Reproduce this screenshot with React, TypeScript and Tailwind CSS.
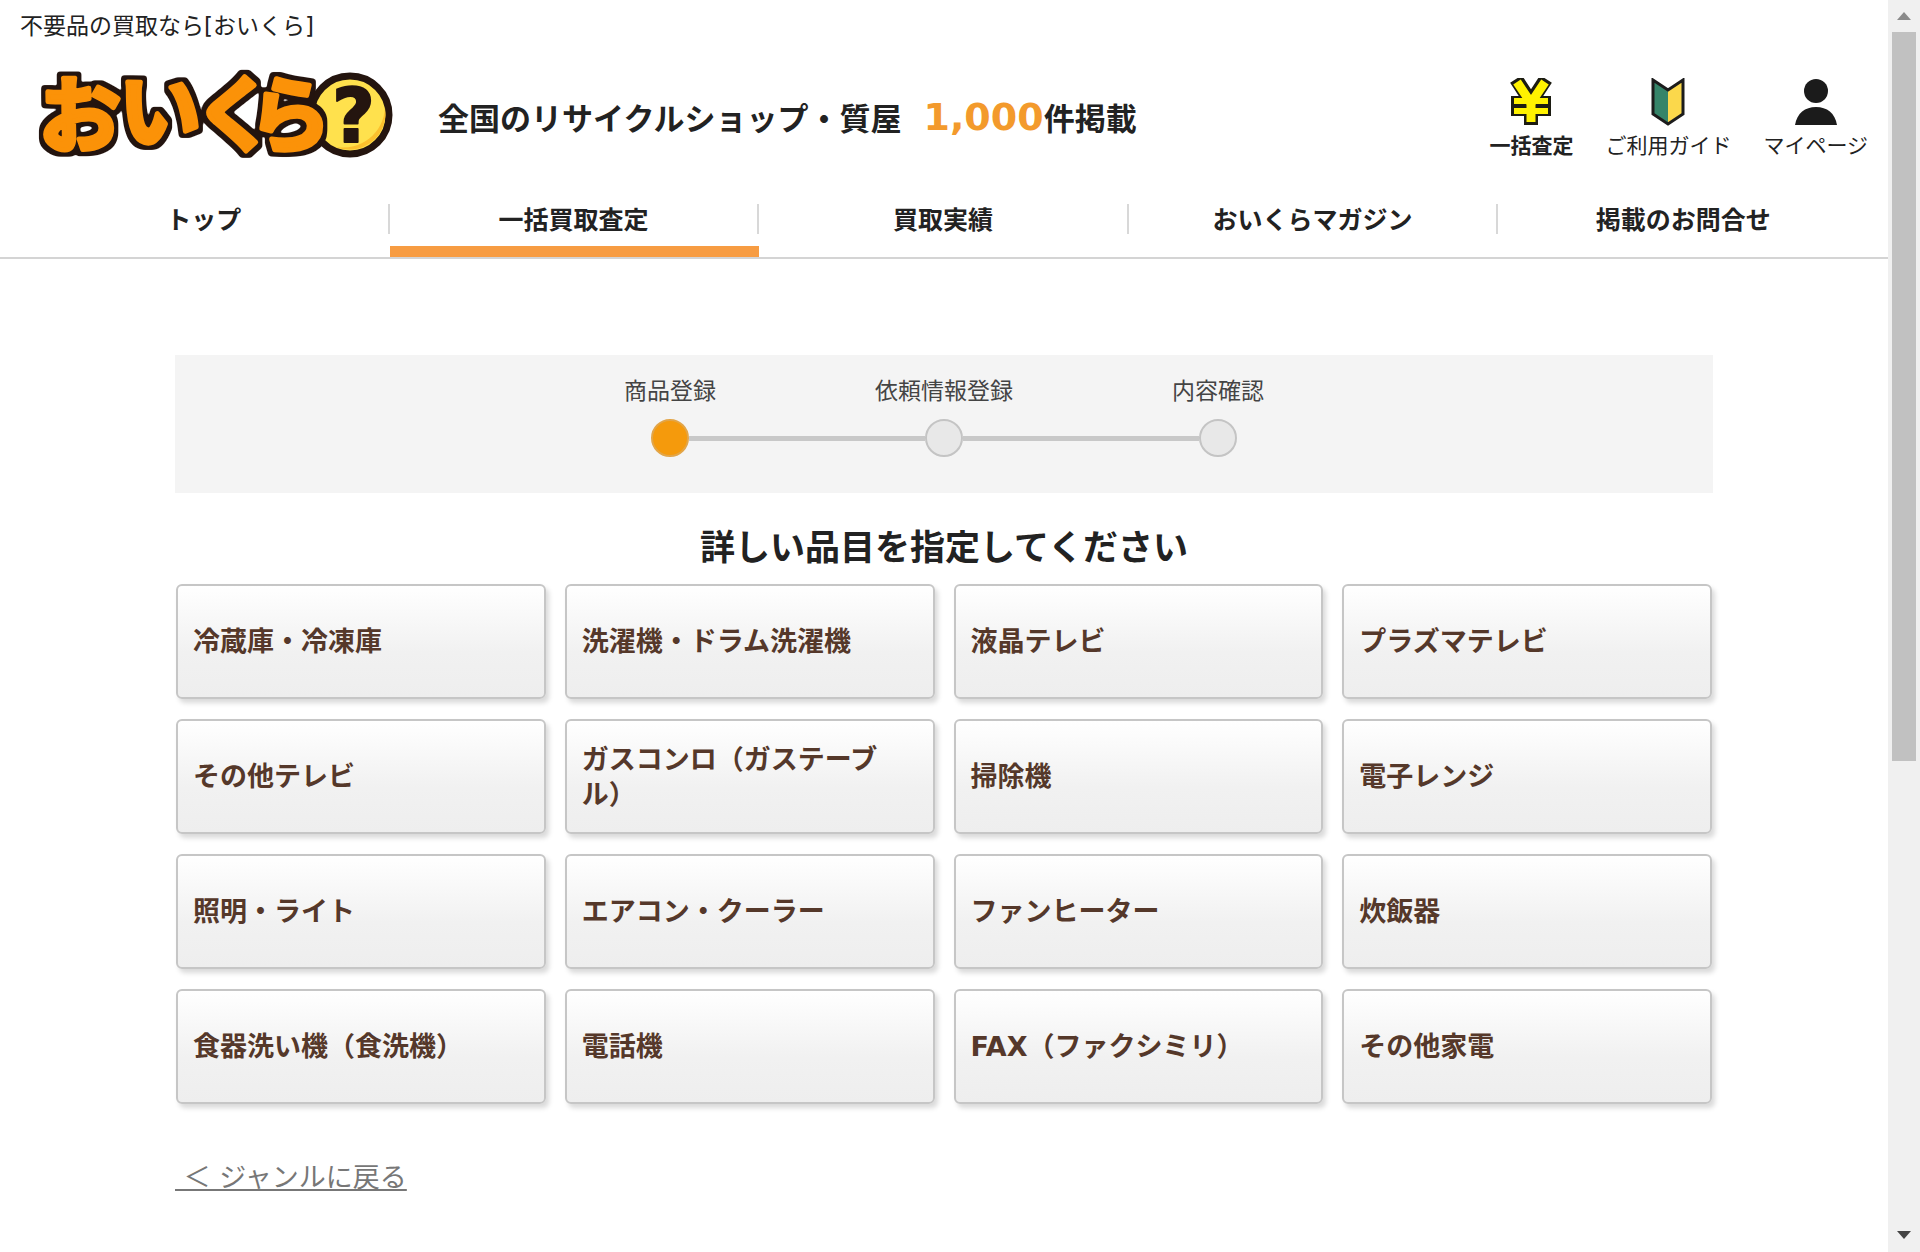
import React from 'react';

const navItems = ['トップ', '一括買取査定', '買取実績', 'おいくらマガジン', '掲載のお問合せ'];

const steps = ['商品登録', '依頼情報登録', '内容確認'];

const categories = [
  '冷蔵庫・冷凍庫',
  '洗濯機・ドラム洗濯機',
  '液晶テレビ',
  'プラズマテレビ',
  'その他テレビ',
  'ガスコンロ（ガステーブル）',
  '掃除機',
  '電子レンジ',
  '照明・ライト',
  'エアコン・クーラー',
  'ファンヒーター',
  '炊飯器',
  '食器洗い機（食洗機）',
  '電話機',
  'FAX（ファクシミリ）',
  'その他家電',
];

const Logo: React.FC = () => (
  <svg width="360" height="92" viewBox="0 0 360 92" className="overflow-visible" role="img" aria-label="おいくら">
    <defs>
      <filter id="logo-outline" x="-10%" y="-10%" width="120%" height="120%" colorInterpolationFilters="sRGB">
        <feMorphology in="SourceAlpha" operator="dilate" radius="4" result="thick" />
        <feGaussianBlur in="thick" stdDeviation="1" result="soft" />
        <feComponentTransfer in="soft" result="edge">
          <feFuncR type="linear" slope="0" intercept="0.140" />
          <feFuncG type="linear" slope="0" intercept="0.080" />
          <feFuncB type="linear" slope="0" intercept="0.060" />
          <feFuncA type="linear" slope="3" intercept="-0.800" />
        </feComponentTransfer>
        <feMerge>
          <feMergeNode in="edge" />
          <feMergeNode in="SourceGraphic" />
        </feMerge>
      </filter>
    </defs>
    <circle cx="314" cy="47" r="39" fill="#ffe14d" stroke="#24150f" strokeWidth="7" />
    <path d="M300 79 A36 36 0 0 0 349 40 A42 42 0 0 1 300 79Z" fill="#fbc02d" />
    <text
      x="3 83 158 213"
      y="77 73 76 77"
      fontSize="82"
      fontWeight="700"
      fill="#fb9208"
      stroke="#fb9208"
      strokeWidth="5"
      strokeLinejoin="round"
      filter="url(#logo-outline)"
    >
      おいくら
    </text>
    <text
      x="296"
      y="74"
      fontSize="74"
      fontWeight="700"
      fill="#24150f"
      stroke="#24150f"
      strokeWidth="2"
      strokeLinejoin="round"
    >
      ?
    </text>
  </svg>
);

const YenIcon: React.FC = () => (
  <svg width="44" height="48" viewBox="0 0 44 48" fill="none" aria-hidden="true">
    <g stroke="#1c1c12">
      <path d="M7 1 L22 24 L37 1" strokeWidth="14" />
      <path d="M22 20 V47" strokeWidth="14" />
      <path d="M2 23 H42 M2 33 H42" strokeWidth="10" />
    </g>
    <g stroke="#fff200">
      <path d="M8 4 L22 25 L36 4" strokeWidth="9" />
      <path d="M22 20 V44" strokeWidth="9" />
      <path d="M5 23 H39 M5 33 H39" strokeWidth="6" />
    </g>
  </svg>
);

const BeginnerIcon: React.FC = () => (
  <svg width="34" height="48" viewBox="0 0 34 48" aria-hidden="true">
    <path d="M2 2 L17 12 V45 L2 35Z" fill="#358469" />
    <path d="M32 2 L17 12 V45 L32 35Z" fill="#fbd84b" />
    <path d="M2 2 L17 12 L32 2 V36 L17 46 L2 36Z" fill="none" stroke="#1c1c1c" strokeWidth="3" />
  </svg>
);

const PersonIcon: React.FC = () => (
  <svg width="44" height="48" viewBox="0 0 44 48" fill="#1b1b1b" aria-hidden="true">
    <circle cx="22" cy="13" r="12" />
    <path d="M1 47 C3 35 11 29 22 29 S41 35 43 47Z" />
  </svg>
);

const headerLinks = [
  { label: '一括査定', icon: <YenIcon />, bold: true },
  { label: 'ご利用ガイド', icon: <BeginnerIcon />, bold: false },
  { label: 'マイページ', icon: <PersonIcon />, bold: false },
];

const Header: React.FC = () => (
  <header className="border-b-2 border-[#d4d4d4]">
    <p className="px-5 pt-3 text-[23px] leading-7">不要品の買取なら[おいくら]</p>
    <div className="flex items-center pt-7 pr-5 pl-9">
      <a href="#">
        <Logo />
      </a>
      <p className="ml-[42px] flex items-baseline pt-2 text-[31px] leading-10 font-bold">
        全国のリサイクルショップ・質屋
        <span className="ml-[22px] text-[38px] text-[#f39a2c]">1,000</span>
        件掲載
      </p>
      <ul className="ml-auto flex gap-8">
        {headerLinks.map((link) => (
          <li key={link.label}>
            <a href="#" className="flex flex-col items-center gap-1.5 pt-2.5 text-[21px] leading-7">
              {link.icon}
              <span className={link.bold ? 'font-bold' : ''}>{link.label}</span>
            </a>
          </li>
        ))}
      </ul>
    </div>
    <nav className="px-5 pt-11">
      <ul className="grid grid-cols-5 text-center text-[25px] leading-[34px] font-bold">
        {navItems.map((item, index) => (
          <li key={item}>
            <a href="#" className="block">
              <span className={`block h-[30px] ${index < navItems.length - 1 ? 'border-r-2 border-[#d8d8d8]' : ''}`}>
                {item}
              </span>
              <span className={`mt-3 block h-[11px] ${index === 1 ? 'bg-[#f79c42]' : ''}`} />
            </a>
          </li>
        ))}
      </ul>
    </nav>
  </header>
);

const StepBar: React.FC = () => (
  <ol className="flex h-[138px] justify-center bg-[#f4f4f4] pt-5 text-[23px] leading-8 text-[#444]">
    {steps.map((step, index) => (
      <li key={step} className="flex w-[274px] flex-col items-center gap-3">
        <span>{step}</span>
        <span className="flex w-full items-center">
          <span className={`h-[5px] flex-1 ${index > 0 ? 'bg-[#c8c8c8]' : ''}`} />
          <span
            className={`h-[38px] w-[38px] rounded-full border-2 ${
              index === 0 ? 'border-[#e2a548] bg-[#f59a0c]' : 'border-[#c4c4c4] bg-[#e8e8e8]'
            }`}
          />
          <span className={`h-[5px] flex-1 ${index < steps.length - 1 ? 'bg-[#c8c8c8]' : ''}`} />
        </span>
      </li>
    ))}
  </ol>
);

const CategoryGrid: React.FC = () => (
  <ul className="grid grid-cols-4 gap-x-[19px] gap-y-5 px-px">
    {categories.map((category) => (
      <li key={category}>
        <a
          href="#"
          className="flex h-[115px] items-center rounded-md border-2 border-[#c6c6c6] bg-linear-to-b from-white via-[#f1f1f1] via-60% to-[#eeeeee] pr-8 pl-[15px] text-[27px] leading-[35px] font-bold text-[#55382a] shadow-[3px_4px_5px_rgba(0,0,0,0.15)]"
        >
          {category}
        </a>
      </li>
    ))}
  </ul>
);

const Scrollbar: React.FC = () => (
  <div className="flex w-8 shrink-0 flex-col items-center bg-[#f0f0f0]" aria-hidden="true">
    <svg width="14" height="32" viewBox="0 0 14 32">
      <path d="M0 20 L7 12 L14 20Z" fill="#8a8a8a" />
    </svg>
    <div className="w-6 grow-[729] bg-[#c1c1c1]" />
    <div className="grow-[459]" />
    <svg width="14" height="32" viewBox="0 0 14 32">
      <path d="M0 11 L7 19 L14 11Z" fill="#444" />
    </svg>
  </div>
);

const App: React.FC = () => (
  <div className="flex min-h-screen bg-white font-['DejaVu_Sans','Noto_Sans_CJK_JP',sans-serif] text-[#222]" lang="ja">
    <div className="min-w-0 flex-1">
      <Header />
      <main className="mx-auto w-[82%] max-w-[1538px] pt-24">
        <StepBar />
        <h1 className="pt-8 pb-[13px] text-center text-[35px] leading-[46px] font-bold">詳しい品目を指定してください</h1>
        <CategoryGrid />
        <p className="pt-14 text-[27px] leading-9">
          <a href="#" className="text-[#777] underline underline-offset-2">
            {'\u00a0＜ ジャンルに戻る'}
          </a>
        </p>
      </main>
    </div>
    <Scrollbar />
  </div>
);

export default App;
